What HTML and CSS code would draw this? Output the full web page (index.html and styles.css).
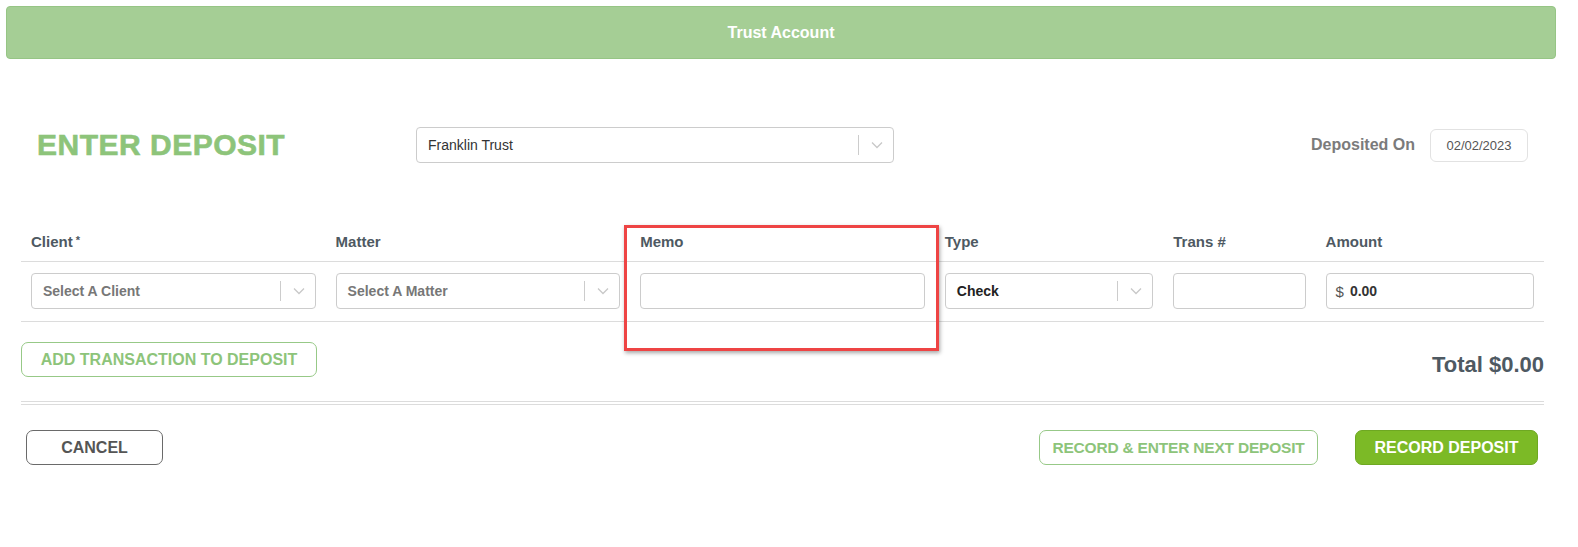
FILE: index.html
```html
<!DOCTYPE html>
<html lang="en">
<head>
    <meta charset="UTF-8">
    <title>Enter Deposit</title>
    <link rel="stylesheet" href="styles.css">
</head>
<body>

    <!-- Barra da conta -->
    <div class="topbar">Trust Account</div>

    <div class="content">
        <div class="title-row">
            <h1 class="page-title">ENTER DEPOSIT</h1>
            <div class="select account-select">
                <span class="select-value">Franklin Trust</span>
                <span class="select-sep"></span>
                <svg class="chevron" viewBox="0 0 12 8" width="12" height="8"><path d="M1 1.5 L6 6.5 L11 1.5" fill="none" stroke="#c8c8c8" stroke-width="1.3"/></svg>
            </div>
            <div class="deposited">
                <span class="deposited-label">Deposited On</span>
                <div class="date-box">02/02/2023</div>
            </div>
        </div>

        <div class="grid head">
            <div class="cell">Client<span class="req">*</span></div>
            <div class="cell">Matter</div>
            <div class="cell">Memo</div>
            <div class="cell">Type</div>
            <div class="cell">Trans #</div>
            <div class="cell">Amount</div>
        </div>
        <div class="grid row">
            <div class="cell">
                <div class="select">
                    <span class="select-placeholder">Select A Client</span>
                    <span class="select-sep"></span>
                    <svg class="chevron" viewBox="0 0 12 8" width="12" height="8"><path d="M1 1.5 L6 6.5 L11 1.5" fill="none" stroke="#c8c8c8" stroke-width="1.3"/></svg>
                </div>
            </div>
            <div class="cell">
                <div class="select">
                    <span class="select-placeholder">Select A Matter</span>
                    <span class="select-sep"></span>
                    <svg class="chevron" viewBox="0 0 12 8" width="12" height="8"><path d="M1 1.5 L6 6.5 L11 1.5" fill="none" stroke="#c8c8c8" stroke-width="1.3"/></svg>
                </div>
            </div>
            <div class="cell"><div class="input"></div></div>
            <div class="cell">
                <div class="select">
                    <span class="select-chosen">Check</span>
                    <span class="select-sep"></span>
                    <svg class="chevron" viewBox="0 0 12 8" width="12" height="8"><path d="M1 1.5 L6 6.5 L11 1.5" fill="none" stroke="#c8c8c8" stroke-width="1.3"/></svg>
                </div>
            </div>
            <div class="cell"><div class="input"></div></div>
            <div class="cell">
                <div class="input money"><span class="currency">$</span><span class="amount">0.00</span></div>
            </div>
        </div>

        <div class="actions">
            <button class="btn btn-outline-green btn-add">ADD TRANSACTION TO DEPOSIT</button>
            <div class="total">Total $0.00</div>
        </div>

        <div class="double-rule"></div>

        <div class="footer">
            <button class="btn btn-cancel">CANCEL</button>
            <div class="footer-right">
                <button class="btn btn-outline-green btn-next">RECORD &amp; ENTER NEXT DEPOSIT</button>
                <button class="btn btn-green">RECORD DEPOSIT</button>
            </div>
        </div>
    </div>

    <!-- Marcação de destaque -->
    <div class="highlight"></div>

</body>
</html>
```

FILE: styles.css
```css
body {
    margin: 0;
    font-family: 'Liberation Sans', Arial, sans-serif;
    background: #fff;
    color: #333;
}

.topbar {
    margin: 6px 22px 0 6px;
    height: 51px;
    line-height: 51px;
    background-color: #a5ce95;
    border: 1px solid #96c585;
    border-radius: 4px;
    color: #fff;
    font-weight: bold;
    font-size: 16px;
    text-align: center;
}

.content {
    padding: 0 34px 0 21px;
}

.title-row {
    display: flex;
    align-items: center;
    margin-top: 68px;
    padding: 0 16px;
    height: 36px;
}

.page-title {
    margin: 0;
    width: 379px;
    font-size: 30px;
    font-weight: bold;
    letter-spacing: 0.5px;
    color: #8dc47a;
    -webkit-text-stroke: 0.6px #8dc47a;
}

.select {
    display: flex;
    align-items: center;
    height: 34px;
    border: 1px solid #ccc;
    border-radius: 4px;
    background: #fff;
    padding-left: 11px;
    font-size: 14px;
}

.account-select {
    width: 465px;
}

.account-select .select-value {
    font-size: 14px;
    color: #333;
}

.select-value,
.select-placeholder,
.select-chosen {
    flex: 1;
}

.select-placeholder {
    color: #777;
    font-weight: bold;
}

.select-chosen {
    color: #222;
    font-weight: bold;
}

.select-sep {
    width: 1px;
    height: 20px;
    background: #ccc;
}

.chevron {
    margin: 0 10px 0 12px;
}

.deposited {
    margin-left: auto;
    display: flex;
    align-items: center;
}

.deposited-label {
    font-size: 16px;
    font-weight: bold;
    color: #7b7b7b;
    margin-right: 15px;
}

.date-box {
    width: 96px;
    height: 31px;
    line-height: 31px;
    border: 1px solid #e2e2e2;
    border-radius: 6px;
    text-align: center;
    font-size: 13px;
    color: #555;
}

.grid {
    display: grid;
    grid-template-columns: 2fr 2fr 2fr 1.5fr 1fr 1.5fr;
    border-bottom: 1px solid #dcdcdc;
}

.grid.head {
    margin-top: 58px;
    height: 40px;
    align-items: center;
}

.grid.head .cell {
    font-size: 15px;
    font-weight: bold;
    color: #4e5962;
}

.req {
    font-size: 11px;
    margin-left: 3px;
    vertical-align: 3px;
}

.cell {
    padding: 0 10px;
}

.grid.row {
    padding: 11px 0 12px;
}

.input {
    height: 34px;
    border: 1px solid #ccc;
    border-radius: 4px;
    background: #fff;
}

.money {
    display: flex;
    align-items: center;
    padding-left: 9px;
    font-size: 14px;
}

.currency {
    color: #555;
    font-size: 15px;
    margin-right: 6px;
}

.amount {
    font-weight: bold;
    color: #333;
}

.actions {
    display: flex;
    justify-content: space-between;
    align-items: flex-end;
    margin-top: 20px;
}

.btn {
    height: 35px;
    padding: 0;
    border-radius: 7px;
    background: #fff;
    font-family: 'Liberation Sans', Arial, sans-serif;
    font-size: 15px;
    font-weight: bold;
    cursor: pointer;
}

.btn-outline-green {
    border: 1px solid #97c987;
    color: #8dc47a;
}

.btn-add {
    width: 296px;
    font-size: 16px;
}

.btn-next {
    width: 279px;
    font-size: 15.5px;
    letter-spacing: -0.2px;
}

.total {
    font-size: 22px;
    font-weight: bold;
    color: #4e5962;
    line-height: 24px;
}

.double-rule {
    margin-top: 24px;
    height: 2px;
    border-top: 1px solid #dcdcdc;
    border-bottom: 1px solid #dcdcdc;
}

.footer {
    display: flex;
    justify-content: space-between;
    margin-top: 25px;
    padding: 0 6px 0 5px;
}

.btn-cancel {
    width: 137px;
    border: 1px solid #6a6a6a;
    color: #555;
    font-size: 16px;
}

.footer-right {
    display: flex;
    gap: 37px;
}

.btn-green {
    width: 183px;
    background: #7cba26;
    border: 1px solid #6ea822;
    color: #fff;
    font-size: 16px;
}

.highlight {
    position: absolute;
    left: 624px;
    top: 225px;
    width: 309px;
    height: 120px;
    border: 3px solid #ee4444;
    box-shadow: 1px 2px 4px rgba(0, 0, 0, 0.35);
}
```
